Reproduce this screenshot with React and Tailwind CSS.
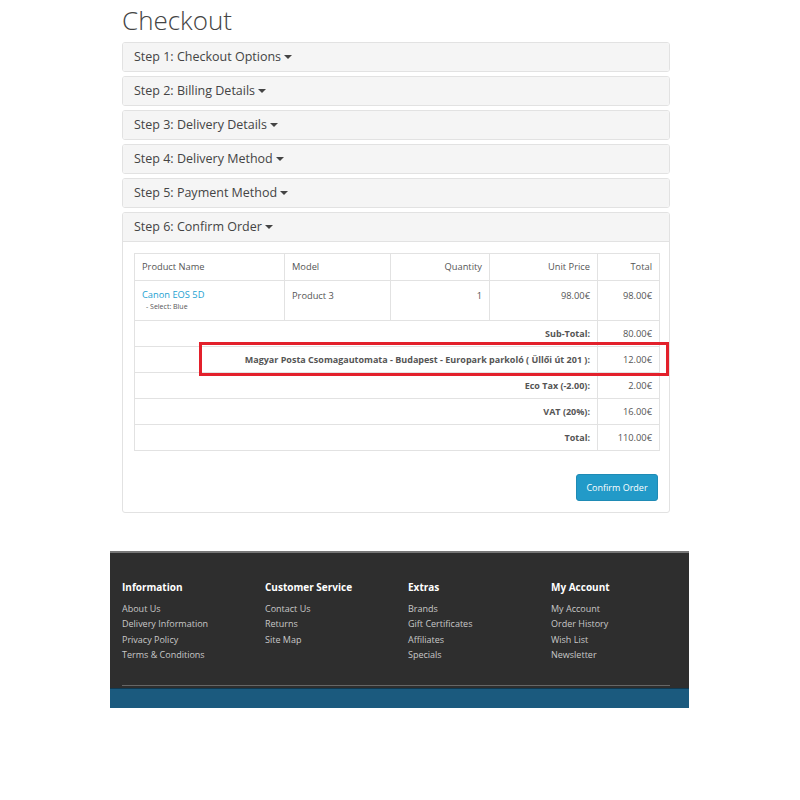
import React from "react";

const steps = [
  "Step 1: Checkout Options",
  "Step 2: Billing Details",
  "Step 3: Delivery Details",
  "Step 4: Delivery Method",
  "Step 5: Payment Method",
];

const totals = [
  { label: "Sub-Total:", value: "80.00€" },
  { label: "Magyar Posta Csomagautomata - Budapest - Europark parkoló ( Üllői út 201 ):", value: "12.00€" },
  { label: "Eco Tax (-2.00):", value: "2.00€" },
  { label: "VAT (20%):", value: "16.00€" },
  { label: "Total:", value: "110.00€" },
];

const footerCols = [
  { title: "Information", links: ["About Us", "Delivery Information", "Privacy Policy", "Terms & Conditions"] },
  { title: "Customer Service", links: ["Contact Us", "Returns", "Site Map"] },
  { title: "Extras", links: ["Brands", "Gift Certificates", "Affiliates", "Specials"] },
  { title: "My Account", links: ["My Account", "Order History", "Wish List", "Newsletter"] },
];

const Caret = () => (
  <span className="inline-block ml-[3px] align-middle w-0 h-0 border-l-[4px] border-r-[4px] border-t-[4px] border-l-transparent border-r-transparent border-t-[#444]" />
);

const PanelHeading = ({ title }) => (
  <div className="h-[28px] bg-[#f5f5f5] px-[11px] flex items-center text-[12.5px] text-[#444]">
    {title}
    <Caret />
  </div>
);

const App = () => {
  return (
    <div className="min-h-[800px] bg-white font-['Open_Sans',sans-serif]">
      <div className="w-[548px] ml-[122px] pt-[4px]">
        <h1 className="text-[26px] font-light text-[#444] leading-[32px] mb-[6px]">Checkout</h1>

        <div className="flex flex-col gap-[4px]">
          {steps.map((s) => (
            <div key={s} className="border border-[#e2e2e2] rounded-[3px] overflow-hidden">
              <PanelHeading title={s} />
            </div>
          ))}

          {/* Step 6 */}
          <div className="border border-[#e2e2e2] rounded-[3px] overflow-hidden">
            <div className="border-b border-[#e2e2e2]">
              <PanelHeading title="Step 6: Confirm Order" />
            </div>
            <div className="px-[11px] pt-[11px] pb-[11px]">
              <div className="relative">
                <table className="w-full border-collapse text-[9.3px] text-[#555] table-fixed">
                  <colgroup>
                    <col className="w-[150px]" />
                    <col className="w-[106px]" />
                    <col className="w-[99px]" />
                    <col className="w-[108px]" />
                    <col className="w-[62px]" />
                  </colgroup>
                  <thead>
                    <tr className="h-[27px]">
                      <td className="border border-[#e2e2e2] px-[7px] text-left">Product Name</td>
                      <td className="border border-[#e2e2e2] px-[7px] text-left">Model</td>
                      <td className="border border-[#e2e2e2] px-[7px] text-right">Quantity</td>
                      <td className="border border-[#e2e2e2] px-[7px] text-right">Unit Price</td>
                      <td className="border border-[#e2e2e2] px-[7px] text-right">Total</td>
                    </tr>
                  </thead>
                  <tbody>
                    <tr className="h-[40px] align-top">
                      <td className="border border-[#e2e2e2] px-[7px] pt-[8px]">
                        <div className="text-[#23a1d1] leading-[12px]">Canon EOS 5D</div>
                        <div className="text-[7px] pl-[4px] leading-[12px]">- Select: Blue</div>
                      </td>
                      <td className="border border-[#e2e2e2] px-[7px] pt-[8px]">Product 3</td>
                      <td className="border border-[#e2e2e2] px-[7px] pt-[8px] text-right">1</td>
                      <td className="border border-[#e2e2e2] px-[7px] pt-[8px] text-right">98.00€</td>
                      <td className="border border-[#e2e2e2] px-[7px] pt-[8px] text-right">98.00€</td>
                    </tr>
                    {totals.map((t) => (
                      <tr key={t.label} className="h-[26px]">
                        <td colSpan={4} className="border border-[#e2e2e2] px-[7px] text-right font-bold text-[9px]">
                          {t.label}
                        </td>
                        <td className="border border-[#e2e2e2] px-[7px] text-right">{t.value}</td>
                      </tr>
                    ))}
                  </tbody>
                </table>
                {/* highlight annotation */}
                <div className="absolute left-[65px] top-[89px] w-[470px] h-[34px] border-[3px] border-[#e3202b] pointer-events-none" />
              </div>

              <div className="flex justify-end mt-[23px]">
                <button className="h-[27px] w-[82px] rounded-[3px] bg-[#229ac8] border border-[#1f8bb5] text-white text-[9px]">
                  Confirm Order
                </button>
              </div>
            </div>
          </div>
        </div>
      </div>

      {/* Footer */}
      <div className="w-[579px] ml-[110px] mt-[38px] bg-[#2e2e2e] border-t-2 border-[#777]">
        <div className="pl-[12px] pr-[19px] pt-[27px]">
          <div className="grid grid-cols-[143px_143px_143px_143px]">
            {footerCols.map((c) => (
              <div key={c.title}>
                <h5 className="text-[10px] font-bold text-white mb-[6px]">{c.title}</h5>
                <ul className="text-[9px] text-[#c8c8c8] leading-[15.3px]">
                  {c.links.map((l) => (
                    <li key={l}>{l}</li>
                  ))}
                </ul>
              </div>
            ))}
          </div>
          <div className="mt-[23px] border-t border-[#666]" />
        </div>
        <div className="h-[2px] bg-[#2e2e2e]" />
        <div className="h-[20px] bg-[#1b5a7e] border-t border-[#0f3a52]" />
      </div>
    </div>
  );
};

export default App;
